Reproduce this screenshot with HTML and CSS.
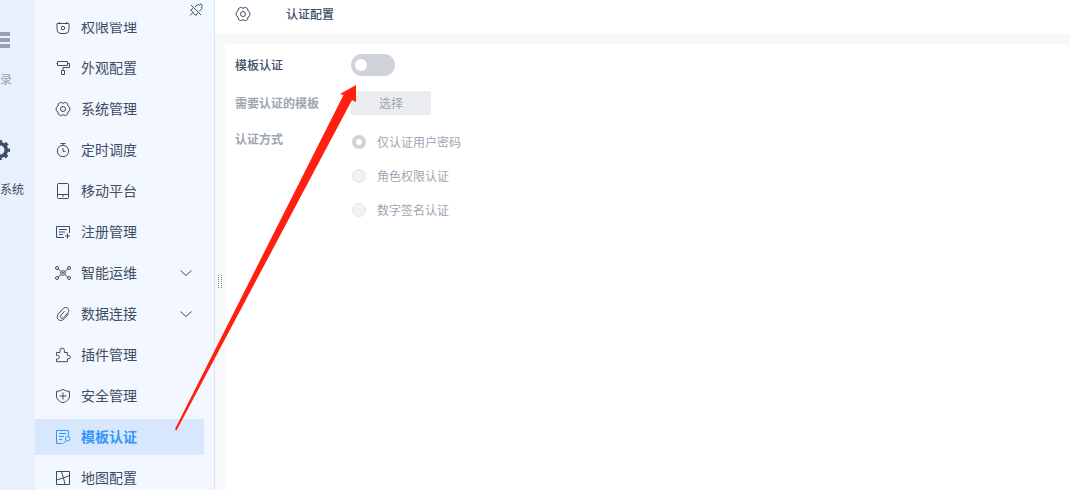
FILE: index.html
```html
<!DOCTYPE html>
<html lang="zh-CN">
<head>
<meta charset="UTF-8">
<meta name="viewport" content="width=device-width, initial-scale=1.0">
<title>认证配置</title>
<link rel="stylesheet" href="styles.css">
</head>
<body>
<div class="app">
    <nav class="rail">
        <a href="#" class="rail-item">
            <svg class="rail-icon" viewBox="0 0 20 20"><path d="M0 4h20M0 10h20M0 16h20" stroke="currentColor" stroke-width="4"/></svg>
            <span>目录</span>
        </a>
        <a href="#" class="rail-item current">
            <svg class="rail-icon" viewBox="0 0 20 20" fill="none" stroke="currentColor"><circle cx="10" cy="10" r="6.3" stroke-width="3.6"/><circle cx="10" cy="10" r="8.8" stroke-width="2.6" stroke-dasharray="3.6 3.31" stroke-dashoffset="1.8"/></svg>
            <span>管理系统</span>
        </a>
    </nav>

    <aside class="sidebar">
        <div class="sidebar-top">
            <button type="button" class="pin" aria-label="取消固定">
                <svg viewBox="0 0 14 14"><path d="M2 2l10 10M6 4l3-2.500L10.500 2 12 .8 13.500 2.500 12.500 4l.5 1.500L10 8.500M4 5.500L1.500 7l5.500 5.500L8.500 10M4 9.500L1 12.500"/></svg>
            </button>
        </div>
        <div class="menu-wrap">
            <ul class="menu">
                <li><a href="#"><svg class="icon" viewBox="0 0 14 14"><path d="M1 3.500h12v6a4 4 0 0 1-4 4H5a4 4 0 0 1-4-4zM3.500 1v2.500M10.500 1v2.500"/><circle cx="7" cy="8" r="1.700"/></svg><span>权限管理</span></a></li>
                <li><a href="#"><svg class="icon" viewBox="0 0 14 14"><path d="M1.500.5h10v4h-10zM.5 2.500h1M11.500 2.500h2v4h-6.500v3M5.500 9.500h3v4h-3z"/></svg><span>外观配置</span></a></li>
                <li><a href="#"><svg class="icon" viewBox="0 0 14 14"><path d="M4.700.3Q7 2.300 9.300.3L11.700 1.700Q11.200 4.500 13.800 5.500V8.500Q11.200 9.500 11.700 12.300L9.300 13.700Q7 11.700 4.700 13.700L2.300 12.300Q2.800 9.500.2 8.500V5.500Q2.800 4.500 2.300 1.700z"/><circle cx="7" cy="7" r="2.500"/></svg><span>系统管理</span></a></li>
                <li><a href="#"><svg class="icon" viewBox="0 0 14 14"><circle cx="7" cy="8" r="5.700"/><path d="M4.500.5h5M7 .5v2M7 5v3.300h2.500"/></svg><span>定时调度</span></a></li>
                <li><a href="#"><svg class="icon" viewBox="0 0 14 14"><rect x="1.500" y="-.5" width="11" height="15" rx="1"/><path d="M1.500 10.500h11M7 11v2"/></svg><span>移动平台</span></a></li>
                <li><a href="#"><svg class="icon" viewBox="0 0 14 14"><path d="M8 12.500H.5v-11h13V8M3 4.500h8M3 7h6M3 9.500h4M11.500 8.500v5M9 11h5"/></svg><span>注册管理</span></a></li>
                <li><a href="#"><svg class="icon" viewBox="0 0 14 14"><circle cx="7" cy="7" r="2.300"/><circle cx="1" cy="2" r="1.500"/><circle cx="13" cy="2" r="1.500"/><circle cx="1" cy="12" r="1.500"/><circle cx="13" cy="12" r="1.500"/><path d="M2.200 3l3 2.500M11.800 3l-3 2.500M2.200 11l3-2.500M11.800 11l-3-2.500M6 6l1 1.500L8 6"/></svg><span>智能运维</span><svg class="chevron" viewBox="0 0 12 6"><path d="M.5.5L6 5.500 11.500.5"/></svg></a></li>
                <li><a href="#"><svg class="icon" viewBox="0 0 14 14"><path d="M12.800 6.500L8.200 11.800C4.500 15.800-1 11.800 2.200 7.300L6.500 2C9.800-1.600 14.800 1.800 11.900 5.800L8 10.300C6 12.500 3.200 10.600 5 8.200L8.500 4.200"/></svg><span>数据连接</span><svg class="chevron" viewBox="0 0 12 6"><path d="M.5.5L6 5.500 11.500.5"/></svg></a></li>
                <li><a href="#"><svg class="icon" viewBox="0 0 14 14"><path d="M.5 4.500H4V2.300a2.200 2.200 0 0 1 4.400 0v2.200h3v3h1.300a1.600 1.600 0 0 1 0 3.200h-1.300v3H.5V11h1a1.800 1.800 0 0 0 0-3.600h-1z"/></svg><span>插件管理</span></a></li>
                <li><a href="#"><svg class="icon" viewBox="0 0 14 14"><path d="M7 .3c2 1.400 4 2 6.500 2V7c0 3-2.700 5.700-6.500 6.700C3.200 12.700.5 10 .5 7V2.300C3 2.300 5 1.700 7 .3zM7 3.500v7M3.500 7h7"/></svg><span>安全管理</span></a></li>
                <li><a href="#" class="active"><svg class="icon" viewBox="0 0 14 14"><path d="M6.500 13.500h-6V.5h12v5M3 3.500h7M3 6.500h5M3 9.500h3M10 10.500l-2.500 3"/><circle cx="11.700" cy="8.700" r="2.300"/></svg><span>模板认证</span></a></li>
                <li><a href="#"><svg class="icon" viewBox="0 0 14 14"><path d="M.5.5h13v13H.5zM5.500.5l2 6.500-7 2M7.500 7l6-2.500M7.500 7l1.500 6.500"/></svg><span>地图配置</span></a></li>
            </ul>
        </div>
    </aside>

    <div class="splitter">
        <svg class="grip" viewBox="0 0 5 13"><path d="M.5 0v13M3.500 0v13" stroke="currentColor" stroke-dasharray="1 1"/></svg>
    </div>

    <main class="main">
        <header class="page-head">
            <svg class="icon" viewBox="0 0 14 14"><path d="M4.700.3Q7 2.300 9.300.3L11.700 1.700Q11.200 4.500 13.800 5.500V8.500Q11.200 9.500 11.700 12.300L9.300 13.700Q7 11.700 4.700 13.700L2.300 12.300Q2.800 9.500.2 8.500V5.500Q2.800 4.500 2.300 1.700z"/><circle cx="7" cy="7" r="2.500"/></svg>
            <h1>认证配置</h1>
        </header>
        <form class="panel">
            <label class="label" for="templateAuth">模板认证</label>
            <input type="checkbox" class="switch" id="templateAuth" role="switch">

            <label class="label muted" for="chooseTemplate">需要认证的模板</label>
            <button type="button" class="choose" id="chooseTemplate" disabled>选择</button>

            <span class="label muted label-top" id="authType">认证方式</span>
            <div class="radios" role="radiogroup" aria-labelledby="authType">
                <label><input type="radio" name="auth" checked disabled>仅认证用户密码</label>
                <label><input type="radio" name="auth" disabled>角色权限认证</label>
                <label><input type="radio" name="auth" disabled>数字签名认证</label>
            </div>
        </form>
    </main>

    <!-- pointer from the menu entry to the switch -->
    <svg class="arrow" viewBox="0 0 182 346"><path d="M181 0L165 9l3.500 1L0 344l1.500 1.500L177 15l4 2z"/></svg>
</div>
</body>
</html>
```
FILE: styles.css
```css
* {
    box-sizing: border-box;
}
body {
    margin: 0;
    font-family: "Noto Sans CJK SC", sans-serif;
    font-size: 12px;
    line-height: 18px;
    color: #3d4d66;
    overflow: hidden;
}
a {
    color: inherit;
    text-decoration: none;
}
svg {
    flex: none;
}
button, input {
    font: inherit;
    margin: 0;
}
.app {
    position: relative;
    display: flex;
    height: 100vh;
    background: #f7f8fa;
}

/* left rail, half of it is scrolled out of view */
.rail {
    flex: none;
    width: 70px;
    margin-left: -35px;
    padding-top: 30px;
    background: #e9f0fd;
}
.rail-item {
    display: flex;
    flex-direction: column;
    align-items: center;
    gap: 20px;
    height: 110px;
    color: #95a0b3;
}
.rail-item.current {
    color: #3d4d66;
}
.rail-icon {
    width: 20px;
    height: 20px;
}

.sidebar {
    display: flex;
    flex-direction: column;
    flex: none;
    width: 180px;
    background: #f3f7ff;
    border-right: 1px solid #dfe5f0;
}
.sidebar-top {
    display: flex;
    justify-content: flex-end;
    flex: none;
    height: 22px;
    padding: 3px 11px 0 0;
}
.pin {
    width: 14px;
    height: 14px;
    padding: 0;
    border: none;
    background: none;
    color: #3d4d66;
}
.pin svg {
    display: block;
}
.pin svg, .icon, .chevron {
    fill: none;
    stroke: currentColor;
    stroke-width: 1;
    overflow: visible;
}
.menu-wrap {
    flex: 1;
    min-height: 0;
    overflow: hidden;
}
.menu {
    display: flex;
    flex-direction: column;
    gap: 5px;
    margin: -13px 10px 0 0;
    padding: 0;
    list-style: none;
    font-size: 14px;
}
.menu a {
    display: flex;
    align-items: center;
    gap: 11px;
    height: 36px;
    padding: 0 12px 0 21px;
}
.menu span {
    padding-bottom: 2px;
}
.menu a.active {
    background: #d6e7fe;
    color: #3296fa;
    font-weight: 700;
}
.icon {
    width: 14px;
    height: 14px;
}
.chevron {
    width: 12px;
    height: 6px;
    margin-left: auto;
}

.splitter {
    display: flex;
    align-items: center;
    flex: none;
    width: 10px;
    padding: 72px 0 0 3px;
    color: #79808c;
    cursor: col-resize;
}
.grip {
    width: 5px;
    height: 13px;
}

.main {
    display: flex;
    flex-direction: column;
    flex: 1;
    min-width: 0;
    gap: 10px;
}
.page-head {
    display: flex;
    align-items: center;
    gap: 36px;
    height: 34px;
    margin-left: -10px;
    padding: 0 21px 6px;
    background: #fff;
}
.page-head h1 {
    margin: 0;
    font-size: 12px;
    font-weight: 500;
}
.panel {
    display: grid;
    grid-template-columns: 116px 1fr;
    grid-template-rows: 22px 24px auto;
    row-gap: 15px;
    align-content: start;
    align-items: center;
    justify-items: start;
    flex: 1;
    padding: 10px;
    background: #fff;
}
.label {
    font-weight: 500;
}
.label-top {
    align-self: start;
}
.muted {
    color: #9ea6b2;
    font-weight: 700;
}
.switch {
    appearance: none;
    width: 44px;
    height: 22px;
    padding: 5px 4px;
    border-radius: 11px;
    background: #cfd2d9;
}
.switch::before {
    content: "";
    display: block;
    width: 12px;
    height: 12px;
    border-radius: 50%;
    background: #fff;
}
.switch:checked {
    background: #3296fa;
}
.switch:checked::before {
    margin-left: auto;
}
.choose {
    width: 80px;
    height: 24px;
    padding: 0;
    border: none;
    border-radius: 2px;
    background: #ebecf0;
    color: #9ea6b2;
}
.radios {
    display: flex;
    flex-direction: column;
    gap: 16px;
    padding-top: 3px;
    color: #9ea6b2;
}
.radios label {
    display: flex;
    align-items: center;
    gap: 11px;
    padding-left: 1px;
}
.radios input {
    appearance: none;
    width: 14px;
    height: 14px;
    border: 1px solid #e3e5ea;
    border-radius: 50%;
    background: #f2f3f7;
}
.radios input:checked {
    border: 4px solid #cfd2d9;
    background: #fff;
}

.arrow {
    position: absolute;
    left: 175px;
    top: 85px;
    width: 182px;
    height: 346px;
    fill: #ff2010;
    pointer-events: none;
}
```
